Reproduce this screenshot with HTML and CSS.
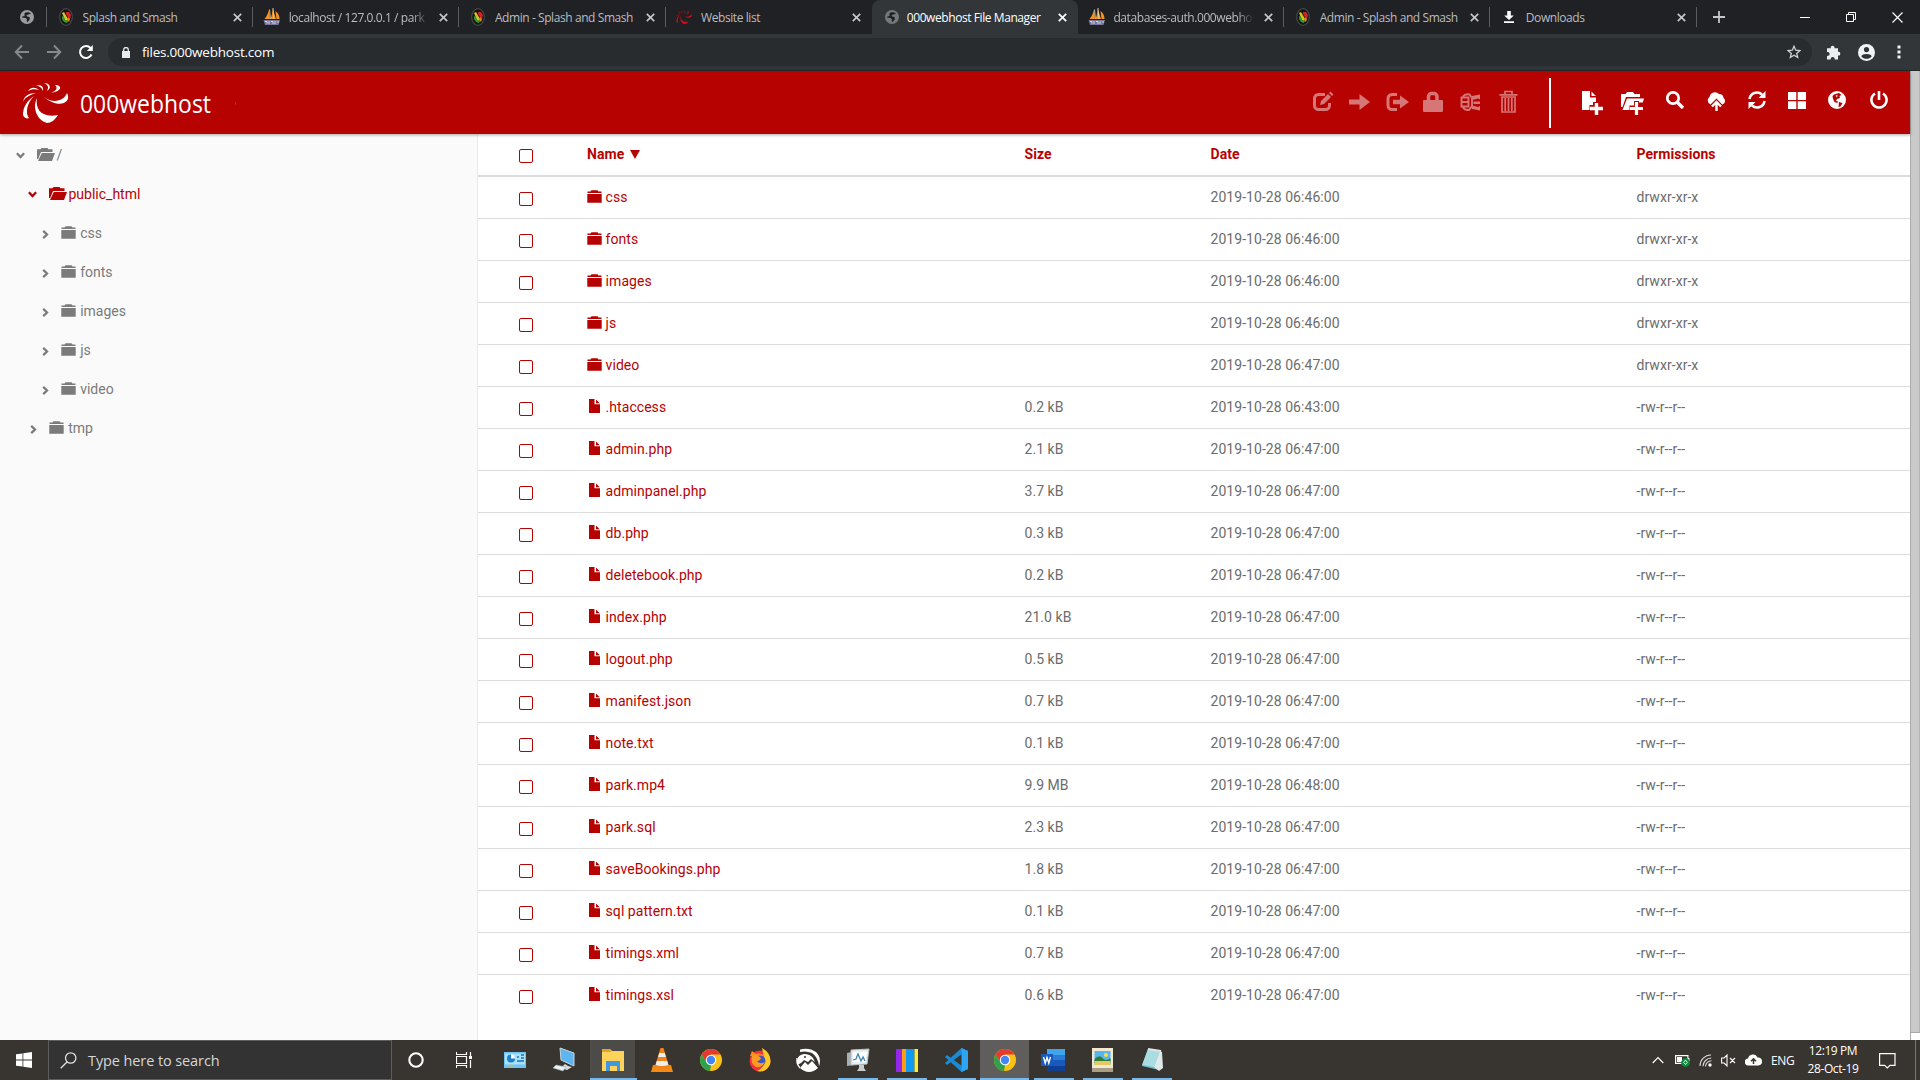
FILE: index.html
```html
<!DOCTYPE html>
<html lang="en">
<head>
<meta charset="utf-8">
<title>000webhost File Manager</title>
<link rel="stylesheet" href="styles.css">
</head>
<body>
<svg class="defs" aria-hidden="true">
  <symbol id="globe" viewBox="0 0 14 14"><circle cx="7" cy="7" r="7" fill="currentColor"/><path d="M4.500 3.200C6 2 9 2 11 3.800L9 4.200 6.500 5.200 7 6.500 9.500 7C10.500 9 9 11 7.500 12L6.500 11 7 9.300 5.500 8 2 7.500 2.200 6.500 4.500 6z" fill="#202124"/></symbol>
  <symbol id="splash" viewBox="0 0 14 18"><ellipse cx="7" cy="9" rx="6.300" ry="8.300" fill="#15170f" stroke="#45474a" stroke-width="1.200"/><path d="M3 5l2-1 4 7-1 2-2-1z" fill="#d9c51c"/><path d="M7 4l3 0 2 3-1 4-2-2-2-3z" fill="#d3202a"/><path d="M3 8l2 1 1 3 3 1-1 2-3-1-2-3z" fill="#2f9b38"/><path d="M9 9l2 2-1 3-2-2z" fill="#e08b17"/></symbol>
  <symbol id="pma" viewBox="0 0 18 18"><path d="M1.500 11C4 8 5.500 4.500 6 1.500L7 11zM7.500 11C9 7 9.500 4 9.500 0L13 11zM12.500 3C15.500 5 16.500 8 16.500 11H13.500z" fill="#f7931e"/><path d="M6.500 1.500L7.500 11M10 0l1 11" stroke="#e7d9b8" stroke-width=".8"/><path d="M.5 12H17l-1.500 5H2z" fill="#77779c"/><path d="M2 13.500h2v2M6 13v3M8 13.500h2v2.500M12 13v3M14 14h2" stroke="#d5d5e4" fill="none"/></symbol>
  <symbol id="swirl" viewBox="0 0 47 42"><path d="M15 16C13 28 20 36 36 33C33 38 29 41 25 41C15 38 10 26 15 16z"/><path d="M22 15C31 22 42 19 45 11C50 20 38 28 22 15z"/><path d="M12 14C5 19 1 25 1 33C2 36 5 37 7 36C3 31 5 21 12 14z"/><path d="M1 20C2 14 7 11 14 11C8 13 3 15 1 20z"/><path d="M6 9C9 5 13 5 17 8C13 7 10 7 6 9z"/><path d="M14 4C18 2 22 4 21 9C20 6 18 4 14 4z"/><path d="M22 1C28 1 30 6 25 9C27 5 26 3 22 1z"/><path d="M33 3C40 3 41 9 29 11C35 8 36 6 33 3z"/></symbol>
  <symbol id="x" viewBox="0 0 8 8"><path d="M.7.7l6.600 6.600M7.300.7L.7 7.300" stroke="currentColor" stroke-width="1.500"/></symbol>
  <symbol id="folder" viewBox="0 0 15 13"><path d="M.5 3V1.500h3L4.500.2h6l1 1.300h3V3zM.3 4h14.400v8.700H.3z" fill="currentColor"/></symbol>
  <symbol id="open" viewBox="0 0 18 13"><path d="M0 11V1.200h3.500L4.500 0h6l1 1.200h4V4H4L1.200 11zM4.800 5H18l-3 8H1z" fill="currentColor"/></symbol>
  <symbol id="file" viewBox="0 0 11 14"><path d="M0 0h5.500v5.300H11V14H0zM7 .5L10.700 4.200H7z" fill="currentColor"/></symbol>
  <symbol id="right" viewBox="0 0 7 9"><path d="M1.200.9L5 4.500 1.200 8.100" fill="none" stroke="currentColor" stroke-width="2.300"/></symbol>
  <symbol id="down" viewBox="0 0 9 7"><path d="M.9 1.200L4.500 5 8.100 1.200" fill="none" stroke="currentColor" stroke-width="2.300"/></symbol>
  <symbol id="chrome" viewBox="0 0 22 22"><circle cx="11" cy="11" r="11" fill="#fbc116"/><path d="M1.500 5.500A11 11 0 0 1 20.500 5.500H11L6.500 13.500z" fill="#e33b2e"/><path d="M1.500 5.500L6.500 13.500 11 16 10 22A11 11 0 0 1 1.500 5.500z" fill="#2ea24c"/><circle cx="11" cy="11" r="5.200" fill="#fff"/><circle cx="11" cy="11" r="4.200" fill="#4285f4"/></symbol>
</svg>

<div class="tabstrip">
  <div class="tab pinned"><svg class="fav g"><use href="#globe"/></svg></div>
  <div class="tab"><svg class="fav"><use href="#splash"/></svg><span class="t">Splash and Smash</span><svg class="x"><use href="#x"/></svg></div>
  <div class="tab"><svg class="fav"><use href="#pma"/></svg><span class="t fade">localhost / 127.0.0.1 / park</span><svg class="x"><use href="#x"/></svg></div>
  <div class="tab"><svg class="fav"><use href="#splash"/></svg><span class="t">Admin - Splash and Smash</span><svg class="x"><use href="#x"/></svg></div>
  <div class="tab nosep"><svg class="fav red"><use href="#swirl"/></svg><span class="t">Website list</span><svg class="x"><use href="#x"/></svg></div>
  <div class="tab active"><svg class="fav g dim"><use href="#globe"/></svg><span class="t">000webhost File Manager</span><svg class="x"><use href="#x"/></svg></div>
  <div class="tab"><svg class="fav"><use href="#pma"/></svg><span class="t fade">databases-auth.000webhost</span><svg class="x"><use href="#x"/></svg></div>
  <div class="tab"><svg class="fav"><use href="#splash"/></svg><span class="t">Admin - Splash and Smash</span><svg class="x"><use href="#x"/></svg></div>
  <div class="tab"><svg class="fav" viewBox="0 0 18 18"><path d="M7.200 3h3.600v4.500h3L9 12 4.200 7.500h3zM4 13.200h10v1.800H4z" fill="#fff"/></svg><span class="t">Downloads</span><svg class="x"><use href="#x"/></svg></div>
  <svg class="plus" viewBox="0 0 12 12"><path d="M6 0v12M0 6h12" stroke="#c4c7ca" stroke-width="1.800"/></svg>
  <div class="winbtns">
    <svg width="10" height="12" viewBox="0 0 10 12"><path d="M0 6.500h10" stroke="#fff"/></svg>
    <svg width="10" height="10" viewBox="0 0 10 10"><path d="M.5 2.500h7v7h-7zM2.500 2.500v-2h7v7h-2" stroke="#fff" fill="none"/></svg>
    <svg width="11" height="11" viewBox="0 0 11 11"><path d="M.5.5l10 10M10.500.5l-10 10" stroke="#fff" stroke-width="1.200"/></svg>
  </div>
</div>

<div class="navbar">
  <svg class="nav" viewBox="0 0 16 16"><path d="M15 8H2M8 1.500L1.700 8 8 14.500" stroke="#878a8d" stroke-width="1.900" fill="none"/></svg>
  <svg class="nav" viewBox="0 0 16 16"><path d="M1 8h13M8 1.500L14.300 8 8 14.500" stroke="#878a8d" stroke-width="1.900" fill="none"/></svg>
  <svg class="nav" viewBox="0 0 16 16"><path d="M13.500 10.500A6 6 0 1 1 12.500 4" stroke="#fff" stroke-width="2" fill="none"/><path d="M14.800 1v6H8.800z" fill="#fff"/></svg>
  <div class="omnibox">
    <svg width="8" height="11" viewBox="0 0 8 11"><path d="M0 4h8v7H0z" fill="#e8eaed"/><path d="M1.700 4.500V2.800a2.300 2.300 0 0 1 4.600 0v1.700" stroke="#e8eaed" stroke-width="1.300" fill="none"/></svg>
    <span class="url">files.000webhost.com</span>
    <svg width="14" height="14" viewBox="0 0 14 14"><path d="M7 1.300l1.700 3.900 4.200.4-3.200 2.800 1 4.100L7 10.300l-3.700 2.200 1-4.100L1.100 5.600l4.200-.4z" fill="none" stroke="#cfd2d5" stroke-width="1.300"/></svg>
  </div>
  <svg class="puz" viewBox="0 0 15 15"><path d="M1 3.200h3.800a1.900 1.900 0 1 1 3.600 0H12v3.600a1.900 1.900 0 1 1 0 3.700V14.500H8.600a2 2 0 1 0-3.800 0H1v-3.700a2 2 0 1 0 0-3.800z" fill="#eceef0"/></svg>
  <svg class="ava" viewBox="0 0 17 17"><circle cx="8.500" cy="8.500" r="8.500" fill="#f1f3f4"/><circle cx="8.500" cy="5.600" r="2.600" fill="#303437"/><path d="M3.300 12.400C4 9.200 13 9.200 13.700 12.400 11 15.500 6 15.500 3.300 12.400z" fill="#303437"/></svg>
  <svg class="dots" viewBox="0 0 4 14"><path d="M.5.500h3v3h-3zM.5 5.500h3v3h-3zM.5 10.500h3v3h-3z" fill="#f1f3f4"/></svg>
</div>

<div class="page">
  <div class="app">
    <header class="topbar">
      <svg class="logo" viewBox="0 0 47 42"><use href="#swirl"/></svg>
      <svg class="brand" width="136" height="34" viewBox="0 0 136 34"><text x="1" y="25" textLength="131" lengthAdjust="spacingAndGlyphs">000webhost</text></svg>
      <span class="speck"></span>
      <div class="tools off">
        <svg style="width:22px" viewBox="0 0 22 22"><path d="M13 3.500H6.500A4 4 0 0 0 2.500 7.500v7A4 4 0 0 0 6.500 18.500h7A4 4 0 0 0 17.500 14.500V12" stroke="currentColor" stroke-width="3" fill="none"/><path d="M8 14l1-4 7-7 3 3-7 7zM17 2l1.500-1.500 3 3L20 5z" fill="currentColor"/></svg>
        <svg style="width:21px" viewBox="0 0 21 22"><path d="M0 8.500h10.500V3L21 11 10.500 19v-5.500H0z" fill="currentColor"/></svg>
        <svg style="width:23px" viewBox="0 0 23 22"><path d="M11 3.500H6A4 4 0 0 0 2 7.500v7a4 4 0 0 0 4 4h5" stroke="currentColor" stroke-width="3" fill="none"/><path d="M7 8.700h7V4.500L23 11 14 17.500v-4.200H7z" fill="currentColor"/></svg>
        <svg style="width:20px" viewBox="0 0 20 22"><path d="M1 9h18q1 0 1 1v10q0 1-1 1H1q-1 0-1-1v-10q0-1 1-1z" fill="currentColor"/><path d="M5.500 10V5.500a3 3 0 0 1 3-3h2.500a3 3 0 0 1 3 3V10" stroke="currentColor" stroke-width="3.500" fill="none"/></svg>
        <svg style="width:20px" viewBox="0 0 20 22"><path d="M1.500 6.500h7v9h-7zM1.500 11h7M3 5.500Q5 2.500 9.500 3.500L12 7v8l-3 4Q5 19.500 3 16.500" stroke="currentColor" stroke-width="1.900" fill="none"/><path d="M12 5l8-1.500v5l-2-1-6 1.500zM13.500 10.500h6.500v2.500h-6.500zM12 14.500l6 1.500 2-1v4.500L12 18z" fill="currentColor"/></svg>
        <svg style="width:19px" viewBox="0 0 19 24"><path d="M.5 4.800h18M6 4.500V1.500h7v3M3 7v15h13V7zM6.200 8v13M9.500 8v13M12.800 8v13" stroke="currentColor" stroke-width="1.700" fill="none"/></svg>
      </div>
      <span class="bar"></span>
      <div class="tools on">
        <svg style="width:21px" viewBox="0 0 21 24"><path d="M0 0h8v6.500h6V11H11v3H7.500v5H0zM9.500.5L14 5H9.500z" fill="currentColor"/><path d="M14.500 12v12M8 17.500h13" stroke="currentColor" stroke-width="3.400"/></svg>
        <svg style="width:23px" viewBox="0 0 23 24"><path d="M0 16V3h4.500L6 1h6l1.500 2H19v3H5L1.500 16zM6 7.500h17l-1.200 4H18V10h-5v4.500H8.500V19H1.500z" fill="currentColor"/><path d="M15.500 11v13M9 17.500h13" stroke="currentColor" stroke-width="3.200"/></svg>
        <svg style="width:18px" viewBox="0 0 18 24"><circle cx="7" cy="7" r="5.700" fill="none" stroke="currentColor" stroke-width="2.700"/><path d="M11 11l6 6" stroke="currentColor" stroke-width="3.400"/></svg>
        <svg style="width:19px" viewBox="0 0 19 24"><path d="M3.500 13.500A4.300 4.300 0 0 1 2.500 6 5.500 5.500 0 0 1 12 3a4 4 0 0 1 4.500 4 3.600 3.600 0 0 1-1.300 6.500L9.500 7.500z" fill="currentColor"/><path d="M9.500 20v-8M5 15.500l4.500-4.500 4.500 4.500" stroke="currentColor" stroke-width="2.400" fill="none"/></svg>
        <svg style="width:18px" viewBox="0 0 18 24"><path d="M1.500 8A7.500 7.500 0 0 1 14 3.500M16.500 10A7.500 7.500 0 0 1 4 14.500" stroke="currentColor" stroke-width="2.500" fill="none"/><path d="M17.500 0v7h-7zM.5 18v-7h7z" fill="currentColor"/></svg>
        <svg style="width:18px" viewBox="0 0 18 24"><path d="M0 1h8.300v8H0zM9.700 1H18v8H9.700zM0 10.200h8.300V18H0zM9.700 10.200H18V18H9.700z" fill="currentColor"/></svg>
        <svg style="width:18px" viewBox="0 0 18 24"><circle cx="9" cy="9" r="9" fill="currentColor"/><path d="M6 3.500L11 2l2.500 2-2 1 .5 2-3 1-1 2 2 .5-.5 1.500-3-1-1.500-3-.5-3z" fill="#b70202"/><path d="M11 11l3.500 1-2 3.500-2 .5z" fill="#b70202"/><path d="M7.500 4.500l2-.5-.5 2.500z" fill="currentColor"/></svg>
        <svg style="width:18px" viewBox="0 0 18 24"><path d="M5 2.500A7.600 7.600 0 1 0 13 2.500" stroke="currentColor" stroke-width="2.600" fill="none"/><path d="M9 0v9" stroke="currentColor" stroke-width="2.600"/></svg>
      </div>
    </header>

    <div class="body">
      <nav class="tree">
        <div class="node l0"><svg class="dn"><use href="#down"/></svg><svg class="of"><use href="#open"/></svg><span>/</span></div>
        <div class="node l1 sel"><svg class="dn"><use href="#down"/></svg><svg class="of"><use href="#open"/></svg><span>public_html</span></div>
        <div class="node l2"><svg class="rt"><use href="#right"/></svg><svg class="cf"><use href="#folder"/></svg><span>css</span></div>
        <div class="node l2"><svg class="rt"><use href="#right"/></svg><svg class="cf"><use href="#folder"/></svg><span>fonts</span></div>
        <div class="node l2"><svg class="rt"><use href="#right"/></svg><svg class="cf"><use href="#folder"/></svg><span>images</span></div>
        <div class="node l2"><svg class="rt"><use href="#right"/></svg><svg class="cf"><use href="#folder"/></svg><span>js</span></div>
        <div class="node l2"><svg class="rt"><use href="#right"/></svg><svg class="cf"><use href="#folder"/></svg><span>video</span></div>
        <div class="node l1"><svg class="rt"><use href="#right"/></svg><svg class="cf"><use href="#folder"/></svg><span>tmp</span></div>
      </nav>
      <main class="list">
        <div class="row head"><i class="cb"></i><b>Name <svg class="sort" viewBox="0 0 10 9"><path d="M0 0h10L5 9z" fill="currentColor"/></svg></b><b>Size</b><b>Date</b><b>Permissions</b></div>
        <div class="row"><i class="cb"></i><a><svg class="d"><use href="#folder"/></svg>css</a><span></span><span>2019-10-28 06:46:00</span><span>drwxr-xr-x</span></div>
        <div class="row"><i class="cb"></i><a><svg class="d"><use href="#folder"/></svg>fonts</a><span></span><span>2019-10-28 06:46:00</span><span>drwxr-xr-x</span></div>
        <div class="row"><i class="cb"></i><a><svg class="d"><use href="#folder"/></svg>images</a><span></span><span>2019-10-28 06:46:00</span><span>drwxr-xr-x</span></div>
        <div class="row"><i class="cb"></i><a><svg class="d"><use href="#folder"/></svg>js</a><span></span><span>2019-10-28 06:46:00</span><span>drwxr-xr-x</span></div>
        <div class="row"><i class="cb"></i><a><svg class="d"><use href="#folder"/></svg>video</a><span></span><span>2019-10-28 06:47:00</span><span>drwxr-xr-x</span></div>
        <div class="row"><i class="cb"></i><a><svg class="f"><use href="#file"/></svg>.htaccess</a><span>0.2 kB</span><span>2019-10-28 06:43:00</span><span>-rw-r--r--</span></div>
        <div class="row"><i class="cb"></i><a><svg class="f"><use href="#file"/></svg>admin.php</a><span>2.1 kB</span><span>2019-10-28 06:47:00</span><span>-rw-r--r--</span></div>
        <div class="row"><i class="cb"></i><a><svg class="f"><use href="#file"/></svg>adminpanel.php</a><span>3.7 kB</span><span>2019-10-28 06:47:00</span><span>-rw-r--r--</span></div>
        <div class="row"><i class="cb"></i><a><svg class="f"><use href="#file"/></svg>db.php</a><span>0.3 kB</span><span>2019-10-28 06:47:00</span><span>-rw-r--r--</span></div>
        <div class="row"><i class="cb"></i><a><svg class="f"><use href="#file"/></svg>deletebook.php</a><span>0.2 kB</span><span>2019-10-28 06:47:00</span><span>-rw-r--r--</span></div>
        <div class="row"><i class="cb"></i><a><svg class="f"><use href="#file"/></svg>index.php</a><span>21.0 kB</span><span>2019-10-28 06:47:00</span><span>-rw-r--r--</span></div>
        <div class="row"><i class="cb"></i><a><svg class="f"><use href="#file"/></svg>logout.php</a><span>0.5 kB</span><span>2019-10-28 06:47:00</span><span>-rw-r--r--</span></div>
        <div class="row"><i class="cb"></i><a><svg class="f"><use href="#file"/></svg>manifest.json</a><span>0.7 kB</span><span>2019-10-28 06:47:00</span><span>-rw-r--r--</span></div>
        <div class="row"><i class="cb"></i><a><svg class="f"><use href="#file"/></svg>note.txt</a><span>0.1 kB</span><span>2019-10-28 06:47:00</span><span>-rw-r--r--</span></div>
        <div class="row"><i class="cb"></i><a><svg class="f"><use href="#file"/></svg>park.mp4</a><span>9.9 MB</span><span>2019-10-28 06:48:00</span><span>-rw-r--r--</span></div>
        <div class="row"><i class="cb"></i><a><svg class="f"><use href="#file"/></svg>park.sql</a><span>2.3 kB</span><span>2019-10-28 06:47:00</span><span>-rw-r--r--</span></div>
        <div class="row"><i class="cb"></i><a><svg class="f"><use href="#file"/></svg>saveBookings.php</a><span>1.8 kB</span><span>2019-10-28 06:47:00</span><span>-rw-r--r--</span></div>
        <div class="row"><i class="cb"></i><a><svg class="f"><use href="#file"/></svg>sql pattern.txt</a><span>0.1 kB</span><span>2019-10-28 06:47:00</span><span>-rw-r--r--</span></div>
        <div class="row"><i class="cb"></i><a><svg class="f"><use href="#file"/></svg>timings.xml</a><span>0.7 kB</span><span>2019-10-28 06:47:00</span><span>-rw-r--r--</span></div>
        <div class="row last"><i class="cb"></i><a><svg class="f"><use href="#file"/></svg>timings.xsl</a><span>0.6 kB</span><span>2019-10-28 06:47:00</span><span>-rw-r--r--</span></div>
      </main>
    </div>
  </div>
  <div class="scroll"><div class="thumb"></div></div>
</div>

<footer class="taskbar">
  <div class="start"><svg width="16" height="16" viewBox="0 0 16 16"><path d="M0 2.300L6.500 1.400V7.500H0zM7.300 1.200L16 0v7.500H7.300zM0 8.400h6.500v6.200L0 13.700zM7.300 8.400H16V16l-8.700-1.200z" fill="#fff"/></svg></div>
  <div class="search"><svg width="17" height="17" viewBox="0 0 17 17"><circle cx="10.700" cy="6" r="5.200" fill="none" stroke="#e0e0e0" stroke-width="1.300"/><path d="M7 10L.7 16.300" stroke="#e0e0e0" stroke-width="1.300"/></svg><span>Type here to search</span></div>
  <div class="cell"><svg width="16" height="16" viewBox="0 0 16 16"><circle cx="8" cy="8" r="6.700" fill="none" stroke="#fff" stroke-width="2.100"/></svg></div>
  <div class="cell"><svg width="17" height="16" viewBox="0 0 17 16"><path d="M.5 0v2.500h10V0M.5 16v-2.500h10V16M.5 4.500h10v7H.5zM14.500 0v4M14.500 8v8" stroke="#fff" fill="none" stroke-width="1.200"/><path d="M13 4h3v3h-3z" fill="#fff"/></svg></div>
  <div class="apps">
    <div class="app-i"><svg width="22" height="22" viewBox="0 0 22 22"><path d="M0 3h22v16H0z" fill="#6cc5f5"/><path d="M1 4.500h20v11H1z" fill="#a9e0fb"/><circle cx="7" cy="9.500" r="4" fill="#1c7fc9"/><path d="M7 9.500V5a4.500 4.500 0 0 1 4 4.500z" fill="#fff"/><path d="M13 8h2M17 6h3M17 9h3M13 12h7" stroke="#1c6fb3" stroke-width="1.500"/><path d="M4 16.500h6" stroke="#f4b12c" stroke-width="1.500"/></svg></div>
    <div class="app-i"><svg width="24" height="26" viewBox="0 0 24 26"><path d="M8 1l14 5v13L9 13z" fill="#5eb6f0" stroke="#c5d6e0"/><path d="M13 17l3 2 4 1-5 3-6-2z" fill="#d5dde2"/><path d="M4 18l10 2-3 4-10-3z" fill="#eef2f4" stroke="#9ba4aa" stroke-width=".6"/></svg></div>
    <div class="app-i on hl"><svg width="24" height="26" viewBox="0 0 24 26"><path d="M1 2h8l2 2h12v20H1z" fill="#fdd35c"/><path d="M1 2h8l1 3H1z" fill="#e0a32e"/><path d="M5 14h14v10h-3v-5H9v5H5z" fill="#3f97e3"/></svg></div>
    <div class="app-i"><svg width="22" height="24" viewBox="0 0 22 24"><path d="M2 17h18l2 7H0z" fill="#f58b12"/><path d="M9.500 0h3l6 20q-7.500 3-15 0z" fill="#f08419"/><path d="M8.300 5h5.400l1.300 4H7zM5.800 13h10.400l1.200 4q-6.500 2-12.800 0z" fill="#eee"/></svg></div>
    <div class="app-i"><svg width="22" height="22"><use href="#chrome"/></svg></div>
    <div class="app-i"><svg width="22" height="24" viewBox="0 0 22 24"><circle cx="11" cy="13" r="10.500" fill="#f6303d"/><path d="M13 0Q22 5 21.500 14A10.500 10.500 0 0 1 8 23Q18 18 15 9 14 5 13 0z" fill="#ffc928"/><path d="M1 8L3 3l4 3q5-2 8 2z" fill="#ff8a1e"/><circle cx="11" cy="13" r="5.500" fill="#3a59c7"/><path d="M3 8q5-3 9 2-1 3-4 3 3 4 8 1-3 6-9 5-6-3-4-11z" fill="#ff9a22"/></svg></div>
    <div class="app-i"><svg width="25" height="24" viewBox="0 0 25 24"><path d="M4 1.500Q13-1 20 4q6 6 3 14Q22 9 16 5 10 2.500 4 4z" fill="#fff"/><path d="M1 12Q2 7 8 6q6 0 9 4l2 4-4-3-3 3-4-2-3 3-4 2z" fill="#fff"/><circle cx="9" cy="9" r="1" fill="#38342f"/><path d="M4 20l5-6 3 3 4-4 6 7q-9 8-18 0z" fill="#fff"/><path d="M1 10Q0 16 4 20" stroke="#fff" stroke-width="1.200" fill="none"/></svg></div>
    <div class="app-i on"><svg width="24" height="24" viewBox="0 0 24 24"><path d="M1 5l14-3v14L1 18z" fill="#a6afb3"/><path d="M5 2l18-1-2 15-16 1z" fill="#e9edef" stroke="#b9c0c3"/><path d="M7 4h14l-1.500 10H7z" fill="#fff"/><path d="M7 12l3-1 2-5 3 7 2-4 2 4" stroke="#3585b7" stroke-width="1.300" fill="none"/><path d="M13 17h5v3l2 3h-9l2-3z" fill="#c6cacc"/></svg></div>
    <div class="app-i on"><svg width="22" height="23" viewBox="0 0 22 23"><path d="M0 0h6v23H0z" fill="#9427ee"/><path d="M6 0h4v23H6z" fill="#ff9e16"/><path d="M10 0h8.500v23H10z" fill="#109bf2"/><path d="M18.500 0H22v23h-3.500z" fill="#ffed33"/></svg></div>
    <div class="app-i on"><svg width="24" height="24" viewBox="0 0 24 24"><path d="M17.500 0L24 3v18l-6.500 3L1 9l2-2 15 11V6L3 17l-2-2z" fill="#1b8ad5"/><path d="M17.500 0L24 3v18l-6.500 3z" fill="#2fa4f0"/></svg></div>
    <div class="app-i on act"><svg width="22" height="22"><use href="#chrome"/></svg></div>
    <div class="app-i on"><svg width="25" height="22" viewBox="0 0 25 22"><path d="M6 0h18v22H6z" fill="#2b7cd3"/><path d="M6 0h18v6H6z" fill="#41a5ee"/><path d="M6 11h18v6H6z" fill="#185abd"/><path d="M6 17h18v5H6z" fill="#103f91"/><path d="M0 5h12v12H0z" fill="#185abd"/><path d="M2.500 8l1.700 6L6 8.500 7.800 14l1.700-6" stroke="#fff" stroke-width="1.400" fill="none"/></svg></div>
    <div class="app-i on"><svg width="21" height="24" viewBox="0 0 21 24"><path d="M0 0h21v24H0z" fill="#f1e8d2"/><path d="M0 20h21v4H0z" fill="#a99d83"/><path d="M2.500 3h16v14h-16z" fill="#57b6ef"/><path d="M2.500 11q5-5 8-1t8 0v5h-16z" fill="#2f7e38"/><path d="M2.500 13h16v4h-16z" fill="#e7c766"/><circle cx="14" cy="7" r="2" fill="#f8e14d"/></svg></div>
    <div class="app-i on"><svg width="24" height="24" viewBox="0 0 24 24"><path d="M8 1l13 2-2 19-17-4z" fill="#6fbfca"/><path d="M8 1l12 2-6 16-12-2z" fill="#a9dde2"/><path d="M20 3l2 1 1 16-4 3-5-4z" fill="#dfe9ea"/><path d="M8 1l13 2" stroke="#e3e3e3" stroke-width="2"/></svg></div>
  </div>
  <div class="tray">
    <svg width="12" height="8" viewBox="0 0 12 8"><path d="M.7 7L6 1.500 11.300 7" fill="none" stroke="#fff" stroke-width="1.200"/></svg>
    <svg width="15" height="13" viewBox="0 0 15 13"><path d="M.6 1.600h12.300v7.800H.6z" fill="none" stroke="#fff" stroke-width="1.200"/><path d="M2 3h5v5H2zM13 4h1.500v3H13z" fill="#fff"/><circle cx="10.500" cy="8.500" r="4.400" fill="#10893e"/><path d="M10.500 6l1.800 2.500-1.800 2-1.800-2z" fill="none" stroke="#fff" stroke-width=".8"/></svg>
    <svg width="13" height="13" viewBox="0 0 13 13"><path d="M1 12A11 11 0 0 1 12 1M4 12.300A8.500 8.500 0 0 1 12.300 4M6.500 12.500A6 6 0 0 1 12.500 6.700" fill="none" stroke="#d8d8d8" stroke-width="1.100"/><circle cx="11" cy="11" r="1.700" fill="#fff"/></svg>
    <svg width="15" height="13" viewBox="0 0 15 13"><path d="M.6 4h2.500L6 1v11L3.100 9H.6zM9 4l5 5M14 4L9 9" fill="none" stroke="#fff" stroke-width="1.100"/></svg>
    <svg width="17" height="12" viewBox="0 0 17 12"><path d="M3.500 11.500A3.500 3.500 0 0 1 3 4.500 5 5 0 0 1 12.500 3.500a4 4 0 0 1 1 8z" fill="#fff"/><path d="M8.500 10V5M6 7.300l2.500-2.500L11 7.300" stroke="#38332f" stroke-width="1.500" fill="none"/></svg>
    <span class="eng">ENG</span>
    <div class="clock"><span>12:19 PM</span><span>28-Oct-19</span></div>
    <svg class="note" width="17" height="16" viewBox="0 0 17 16"><path d="M.6.6h15.400v11.800h-5L8.300 15 5.600 12.400h-5z" fill="none" stroke="#fff" stroke-width="1.200"/></svg>
    <span class="peek"></span>
  </div>
</footer>
</body>
</html>
```
FILE: styles.css
```css
* { box-sizing: border-box; }
body { margin: 0; width: 1920px; height: 1080px; overflow: hidden; display: flex; flex-direction: column; background: #fff; font-family: Roboto, sans-serif; font-size: 14px; }
svg { display: block; flex: none; }
.defs { position: absolute; width: 0; height: 0; }

.tabstrip { height: 34px; background: #202124; display: flex; align-items: center; font: 12px "Open Sans", sans-serif; color: #b9bcc0; }
.tab { width: 206.200px; height: 34px; display: flex; align-items: center; padding: 0 11px 0 10px; background: linear-gradient(#5a5c5f, #5a5c5f) right 7px / 1px 20px no-repeat; }
.tab.pinned { width: 47px; padding-left: 20px; }
.tab.nosep, .tab.active { background-image: none; }
.tab.active { background: #323639; border-radius: 8px 8px 0 0; color: #fff; }
.fav { width: 18px; height: 18px; margin-right: 7.500px; }
.fav.g { width: 14px; height: 14px; margin: 0 8px 0 3px; color: #9a9da0; }
.tab.pinned .fav.g { margin: 0; }
.fav.dim { color: #75787b; }
.fav.red { fill: #c8101a; width: 16px; height: 15px; margin: 0 9.500px 0 0; }
.t { flex: 1; white-space: nowrap; overflow: hidden; letter-spacing: -.42px; }
.fade { -webkit-mask-image: linear-gradient(90deg, #000 88%, transparent); mask-image: linear-gradient(90deg, #000 88%, transparent); }
.x { width: 9px; height: 9px; margin-left: 4px; color: #c4c7ca; }
.fade + .x { margin-left: 10px; }
.active .x { color: #fff; }
.plus { width: 12px; height: 12px; margin-left: 16px; }
.winbtns { margin-left: auto; height: 28px; display: flex; align-items: center; gap: 36px; padding-right: 17px; }

.navbar { height: 37px; background: #323639; border-bottom: 1px solid #25282a; display: flex; align-items: center; padding-left: 14px; }
.nav { width: 16px; height: 16px; margin-right: 16px; }
.omnibox { width: 1704px; height: 28px; margin-left: -2px; border-radius: 14px; background: #282c2f; display: flex; align-items: center; padding: 0 11px 0 14px; }
.url { flex: 1; margin-left: 12px; color: #fff; font: 13.500px "Open Sans", sans-serif; letter-spacing: -.22px; }
.puz { width: 15px; height: 15px; margin-left: 14px; }
.ava { width: 17px; height: 17px; margin-left: 17px; }
.dots { width: 4px; height: 14px; margin-left: 22px; }

.page { height: 969px; display: flex; }
.app { width: 1910px; display: flex; flex-direction: column; }
.topbar { height: 63px; background: #b70202; display: flex; align-items: flex-start; padding-left: 22px; color: #fff; position: relative; box-shadow: 0 1px 3px rgba(0,0,0,.35); }
.logo { width: 47px; height: 42px; margin-top: 11px; fill: #fff; }
.brand { margin: 17px 0 0 9.500px; fill: #fff; font: 25.500px "Open Sans", sans-serif; overflow: visible; }
.speck { width: 1px; height: 3px; margin: 31px 0 0 20px; background: #b3119a; }
.tools { display: flex; }
.tools svg { height: 24px; }
.off { margin: 20px 0 0 auto; color: #d67676; gap: 15.500px; }
.off svg { height: 22px; }
.off svg:nth-child(4) { margin-left: -1.500px; }
.off svg:nth-child(5) { margin-left: 1.500px; }
.off svg:nth-child(6) { margin: -1px 0 0 4px; height: 24px; }
.bar { width: 2px; height: 50px; margin: 7px 31px 0 31px; background: #fff; }
.tools.on { margin: 20px 22px 0 0; gap: 22px; }
.on svg:nth-child(2) { margin-left: -4px; }
.on svg:nth-child(4) { margin-left: 1px; }
.on svg:nth-child(8) { margin-left: 2px; }

.body { flex: 1; display: flex; }
.tree { width: 478px; background: #fafafa; border-right: 1px solid #eaeaea; padding-top: 2px; color: #7b7b7b; }
.node { height: 39px; display: flex; align-items: center; }
.l0 { padding-left: 16px; }
.l1 { padding-left: 28px; }
.l2 { padding-left: 42px; }
.sel { color: #b70202; }
.node span { padding-bottom: 1px; }
.dn { width: 9px; height: 7px; margin-right: 11.500px; }
.of { width: 18px; height: 13px; margin: -2px 2px 0 0; }
.rt { width: 7px; height: 9px; margin: 2px 11.500px 0 0; }
.l1 .rt { margin-left: 2px; }
.cf { width: 15px; height: 13px; margin: -2px 4.700px 0 0; }

.list { width: 1432px; color: #6c6c6c; letter-spacing: .05px; }
.row { height: 42px; border-bottom: 1px solid #dcdcdc; display: grid; grid-template-columns: 109px 437.500px 186px 426px 1fr; align-items: center; line-height: 18px; padding-bottom: 1px; }
.head { height: 43px; border-bottom: 2px solid #dcdcdc; padding: 0 0 2px; color: #b70202; }
.head b { font-weight: 700; }
.row.last { border-bottom-color: transparent; }
.cb { width: 14px; height: 14px; margin: 3px 0 0 41px; border: 1.500px solid #b70202; border-radius: 2px; }
.head .cb { margin-top: 5px; }
.row a { color: #b70202; display: flex; align-items: center; }
.sort { display: inline-block; width: 10px; height: 9px; margin-left: 2px; }
.d { width: 15px; height: 13px; margin: -1px 3.600px 0 0; }
.f { width: 11px; height: 14px; margin: -3px 6px 0 1.600px; }

.scroll { width: 10px; background: #fff; border-left: 1px solid #ababab; }
.thumb { height: 962px; background: #c9c9c9; border-right: 1px solid #b5b5b5; border-bottom: 1px solid #a8a8a8; }

.taskbar { height: 40px; background: #38342f; display: flex; font-family: "Open Sans", sans-serif; color: #fff; }
.start { width: 48px; display: flex; align-items: center; justify-content: center; }
.search { width: 344px; background: #333; border: 1px solid #5f5e5c; display: flex; align-items: center; padding-left: 11px; color: #d6d6d6; font-size: 14.500px; letter-spacing: -.1px; }
.search span { margin-left: 11px; }
.cell { width: 48px; display: flex; align-items: center; justify-content: center; }
.apps { display: flex; margin-left: 2px; }
.app-i { width: 49px; height: 40px; display: flex; align-items: center; justify-content: center; }
.app-i.on { background: linear-gradient(#76b9ed, #76b9ed) center bottom / 40px 2px no-repeat; }
.app-i.hl { background: linear-gradient(#76b9ed, #76b9ed) right bottom / 47px 2px no-repeat, linear-gradient(#4d4b48, #4d4b48) 2px 0 / 45px 40px no-repeat; }
.app-i.act { background: linear-gradient(#76b9ed, #76b9ed) bottom / 100% 2px no-repeat, #605e5c; }
.tray { margin-left: auto; display: flex; align-items: center; font-size: 12px; }
.tray svg { margin-right: 9px; }
.tray svg:first-child { margin-right: 11px; }
.eng { letter-spacing: -.4px; width: 24px; }
.clock { width: 68px; margin-left: 4px; display: flex; flex-direction: column; align-items: center; line-height: 18px; letter-spacing: -.4px; }
.tray .note { margin: 1px 19px 0 12px; }
.peek { width: 1px; height: 40px; background: #7b7874; margin-right: 4px; }
```
